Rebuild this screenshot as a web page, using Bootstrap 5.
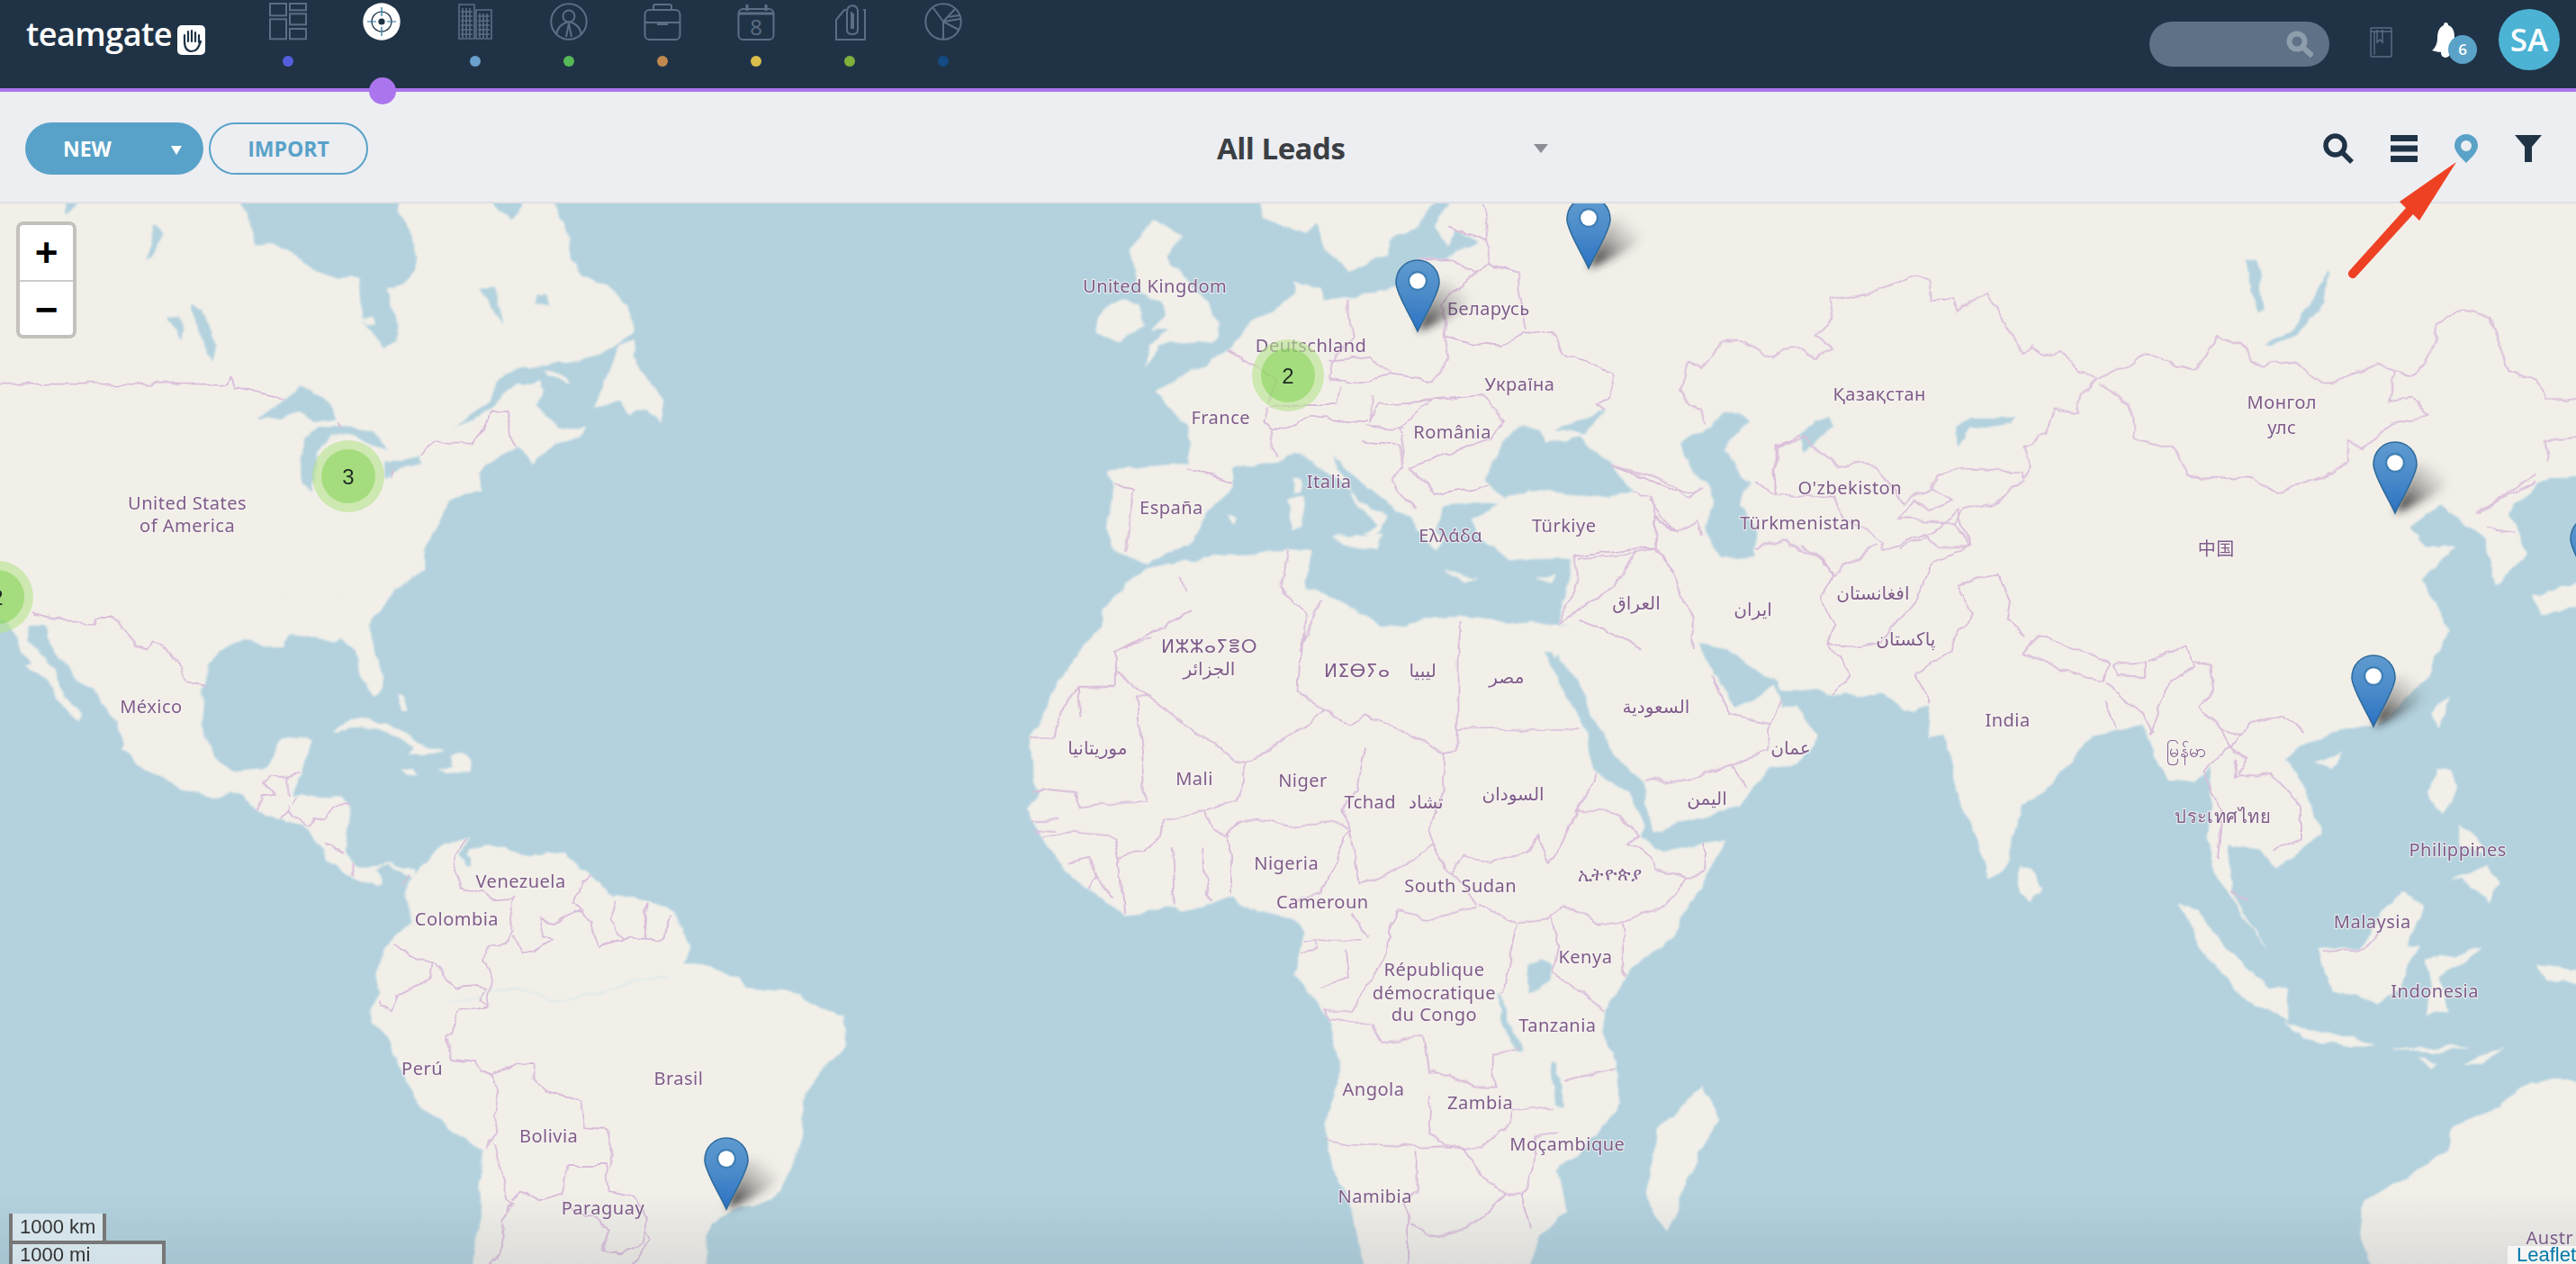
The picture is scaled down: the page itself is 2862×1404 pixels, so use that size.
<!DOCTYPE html>
<html lang="en">
<head>
<meta charset="utf-8">
<title>Teamgate - All Leads</title>
<link href="https://cdn.jsdelivr.net/npm/bootstrap@5.3.0/dist/css/bootstrap.min.css" rel="stylesheet">
<style>
html,body{height:100%;margin:0;overflow:hidden;background:#edeef2}
body{font-family:"Open Sans","Noto Sans",sans-serif}
.app-root{height:1404px;width:2862px;display:flex;flex-direction:column;position:relative}
.top-bar{height:102px;background:#203346;border-bottom:4px solid #ab75ed;align-items:flex-start;flex-wrap:nowrap;padding:0}
.brand-box{width:268px;height:98px;padding:0 0 0 29px;display:flex;align-items:flex-start;gap:6px;margin:0}
.brand-word{font-family:"Open Sans",sans-serif;font-weight:600;color:#fff;font-size:36px;line-height:1;margin-top:20px;letter-spacing:-.5px}
.brand-hand{width:31px;height:33px;margin-top:28px;flex:none}
.mod-list{display:flex;margin:0;padding:0;list-style:none}
.mod-item{width:104px;height:98px;display:flex;flex-direction:column;align-items:center;position:relative;padding-top:3px}
.mod-item svg{display:block;width:42px;height:42px;fill:none;stroke:#5a6e84;stroke-width:2}
.mod-dot{width:12px;height:12px;border-radius:50%;margin-top:17px}
.mod-on{width:30px;height:30px;border-radius:50%;background:#ab75ed;position:absolute;left:38px;top:86px;z-index:3}
.dot-a{background:#535fdc}.dot-b{background:#6aa0cc}.dot-c{background:#55b957}.dot-d{background:#c08a4f}.dot-e{background:#d9bf4c}.dot-f{background:#7fb03a}.dot-g{background:#154a85}
.top-right{display:flex;align-items:center;height:98px;margin-left:auto;padding-right:18px}
.find-pill{width:200px;height:50px;border-radius:25px;background:#5e7186;display:flex;align-items:center;justify-content:flex-end;padding-right:18px;margin-right:45px}
.book-ico{width:25px;height:34px;margin-right:44px;margin-top:-4px}
.bell-wrap{position:relative;width:46px;height:42px;margin-right:28px;margin-top:-8px}
.bell-count{position:absolute;left:18px;top:15px;width:32px;height:32px;border-radius:50%;background:#5aa2c8;color:#fff;font-size:17px;font-weight:600;line-height:32px;text-align:center}
.user-disc{width:68px;height:68px;border-radius:50%;background:#4cb3d4;color:#fff;font-size:35px;font-weight:600;line-height:68px;text-align:center;margin-top:-10px}
.tool-bar{height:124px;background:#edeef2;border-bottom:2px solid #dfdfe4;display:flex;align-items:center;padding:4px 0 0 28px}
.tool-left{flex:1 1 0;display:flex;gap:6px;align-items:center}
.btn.new-btn{width:198px;height:58px;background:#58a2c9;color:#fff;border:0;border-radius:29px;font-weight:700;font-size:23px;display:flex;align-items:center;justify-content:space-between;padding:0 24px 0 42px}
.new-caret{width:0;height:0;border-left:6px solid transparent;border-right:6px solid transparent;border-top:10px solid #fff;margin-top:3px}
.btn.imp-btn{width:177px;height:58px;background:transparent;color:#58a2c9;border:2px solid #58a2c9;border-radius:29px;font-weight:700;font-size:23px;padding:0}
.view-pick{width:590px;display:flex;align-items:center;padding-left:221px}
.view-name{font-size:33px;font-weight:700;color:#3b3f44;margin:0;letter-spacing:-.5px}
.view-caret{margin-left:auto;margin-right:1px;width:0;height:0;border-left:8px solid transparent;border-right:8px solid transparent;border-top:10px solid #8b8f95}
.tool-right{flex:1 1 0;display:flex;justify-content:flex-end;align-items:center;gap:41px;padding-right:38px}
.tool-right svg{display:block}
.map-area{flex:1 1 auto;position:relative;overflow:hidden;background:#b3d2de}
.map-svg{display:block;width:2862px;height:1178px}
.lnd{fill:#f2efe9;stroke:#f2efe9;stroke-width:1;vector-effect:non-scaling-stroke}
.wtr{fill:#b3d2de;stroke:#b3d2de;stroke-width:1;vector-effect:non-scaling-stroke}
.riv{fill:none;stroke:#dfeaea;stroke-width:2;vector-effect:non-scaling-stroke}
.brd polyline{fill:none;stroke:#d9bdd9;stroke-width:1.9;vector-effect:non-scaling-stroke;stroke-linejoin:round}
.lbl text{font-family:"Noto Sans","DejaVu Sans","Noto Sans CJK SC",sans-serif;font-size:11px;fill:#7f5c8a;text-anchor:middle;stroke:#f6f3f0;stroke-opacity:.75;stroke-width:1.3px;paint-order:stroke;letter-spacing:.25px}
.clu-num{font-family:"Liberation Sans",Arial,sans-serif;font-size:24px;fill:#1f2a24;text-anchor:middle}
.zoom-box{position:absolute;left:18px;top:20px;width:67px;border:4px solid #c4c1bc;border-radius:8px;background:#fff;overflow:hidden}
.zoom-key{display:block;height:61px;text-align:center;color:#000;font:700 44px/62px "Liberation Sans",Arial,sans-serif;text-decoration:none}
.zoom-key+.zoom-key{border-top:2px solid #ccc}
.scale-wrap{position:absolute;left:10px;bottom:0;font:22px/26px "Liberation Sans",Arial,sans-serif;color:#333}
.scale-km{width:108px;height:30px;border:4px solid #777;border-top:0;border-bottom:0;background:rgba(255,255,255,.5);padding:2px 0 0 8px;white-space:nowrap}
.scale-mi{width:174px;height:26px;border:4px solid #777;border-bottom:0;background:rgba(255,255,255,.5);padding:0 0 0 8px;white-space:nowrap;line-height:24px}
.attrib{position:absolute;right:0;bottom:0;height:20px;background:rgba(255,255,255,.7);padding:0 0 0 10px;font:22px/20px "Liberation Sans",Arial,sans-serif}
.attrib a{color:#0078a8;text-decoration:none}
.fade-foot{position:absolute;left:0;right:0;bottom:0;height:80px;background:linear-gradient(rgba(70,90,110,0),rgba(70,90,110,.12));pointer-events:none}
.call-out{position:absolute;left:2600px;top:170px;width:140px;height:150px;z-index:5}
</style>
</head>
<body>
<div class="app-root">
<nav class="navbar top-bar">
  <a class="navbar-brand brand-box" href="#"><span class="brand-word">teamgate</span>
    <svg class="brand-hand" viewBox="0 0 31 33"><rect width="31" height="33" rx="5" fill="#fff"/><path d="M8 19v-8M12 18V7M16 18V6M20 18V8M24 19v-8M8 18c0 7 3 11 8 11s7-3 10-11" fill="none" stroke="#203346" stroke-width="2.2" stroke-linecap="round"/></svg>
  </a>
  <ul class="mod-list">
    <li class="mod-item"><svg viewBox="0 0 42 42"><rect x="1" y="1" width="18" height="13.3"/><rect x="23" y="1" width="18" height="7.3"/><rect x="23" y="12.3" width="18" height="12"/><rect x="1" y="18.3" width="18" height="22"/><rect x="23" y="29" width="18" height="11.3"/></svg><span class="mod-dot dot-a"></span></li>
    <li class="mod-item"><svg viewBox="0 0 42 42"><circle cx="21" cy="21" r="20.7" fill="#fff" stroke="none"/><circle cx="21" cy="21" r="11" stroke="#203346" stroke-width="1.2"/><circle cx="21" cy="21" r="3.6" fill="#203346" stroke="none"/><path d="M21 5v10M21 27v10M5 21h10M27 21h10" stroke="#1f6f9c" stroke-width="1.2"/></svg><span class="mod-on"></span></li>
    <li class="mod-item"><svg viewBox="0 0 42 42"><path d="M3 40V2h17v38zM22 40V8h17v32zM7 6v33M11 6v33M15 6v33M26 12v27M30 12v27M34 12v27M5 10h13M5 15h13M5 20h13M5 25h13M5 30h13M5 35h13M24 15h13M24 20h13M24 25h13M24 30h13M24 35h13" stroke-width="1.6"/></svg><span class="mod-dot dot-b"></span></li>
    <li class="mod-item"><svg viewBox="0 0 42 42"><circle cx="21" cy="21" r="19.7"/><circle cx="21" cy="15" r="6.5"/><path d="M7 36c1-8 6-13 14-15 8 2 13 7 14 15M21 23l-3 15M21 23l3 15"/></svg><span class="mod-dot dot-c"></span></li>
    <li class="mod-item"><svg viewBox="0 0 42 42"><rect x="1.5" y="8" width="39" height="33" rx="5"/><path d="M11 8V4q0-2 2-2h16q2 0 2 2v4M1.5 22h39M16 22v2h10v-2"/></svg><span class="mod-dot dot-d"></span></li>
    <li class="mod-item"><svg viewBox="0 0 42 42"><rect x="1.5" y="7" width="39" height="34" rx="5"/><path d="M1.500 12h39M11 2v7M32 2v7" stroke-width="3"/><text x="21" y="36" text-anchor="middle" font-family="Open Sans,sans-serif" font-size="24" fill="#5a6e84" stroke="none">8</text></svg><span class="mod-dot dot-e"></span></li>
    <li class="mod-item"><svg viewBox="0 0 42 42"><path d="M15 8 6 19v22h32V8h-2M15 8h2"/><path d="M18 10v20q0 5 6 5t6-5V9q0-5-6-6-6 1-6 7M23 10v18h2V12" stroke-width="2"/></svg><span class="mod-dot dot-f"></span></li>
    <li class="mod-item"><svg viewBox="0 0 42 42"><circle cx="21" cy="21" r="19.7"/><path d="M21 41V21L10 6M21 21 34 7M21 21l19-3M21 21l17 9M25 16l14-2"/></svg><span class="mod-dot dot-g"></span></li>
  </ul>
  <div class="top-right">
    <div class="find-pill"><svg width="30" height="30" viewBox="0 0 30 30"><circle cx="12" cy="12" r="8.5" fill="none" stroke="#8e9dac" stroke-width="6"/><path d="m18 18 11 10" stroke="#8e9dac" stroke-width="6"/></svg></div>
    <svg class="book-ico" viewBox="0 0 25 34" fill="none" stroke="#5a6e84" stroke-width="1.4"><rect x="1" y="1" width="23" height="32" rx="1"/><path d="M1 5h23M5 5v26M8 3v14l3-3 3 3V3"/></svg>
    <div class="bell-wrap"><svg width="30" height="40" viewBox="0 0 30 40"><path d="M15 1c2 0 3 1 3 3 6 2 7 8 7 14 0 6 2 11 5 14-9 3-21 3-30 0 4-3 6-8 6-14 0-6 2-12 7-14 0-2 1-3 2-3z" fill="#fff"/><circle cx="15" cy="35" r="5" fill="#fff"/></svg><span class="bell-count">6</span></div>
    <div class="user-disc">SA</div>
  </div>
</nav>
<div class="tool-bar">
  <div class="tool-left">
    <button type="button" class="btn new-btn"><span>NEW</span><span class="new-caret"></span></button>
    <button type="button" class="btn imp-btn">IMPORT</button>
  </div>
  <div class="view-pick"><h1 class="view-name">All Leads</h1><span class="view-caret"></span></div>
  <div class="tool-right">
    <svg width="34" height="34" viewBox="0 0 34 34"><circle cx="13.5" cy="13.5" r="10.5" fill="none" stroke="#203346" stroke-width="5.5"/><path d="m21 21 11 11" stroke="#203346" stroke-width="5.5"/></svg>
    <svg width="30" height="30" viewBox="0 0 30 30" fill="#203346"><rect width="30" height="7"/><rect y="11.500" width="30" height="7"/><rect y="23" width="30" height="7"/></svg>
    <svg width="26" height="32" viewBox="0 0 26 32"><path fill-rule="evenodd" d="M13 0C5.500 0 0 5.500 0 13c0 7 9 15 13 19 4-4 13-12 13-19C26 5.500 20.500 0 13 0zm0 7a6 6 0 1 1 0 12 6 6 0 0 1 0-12z" fill="#5aa2c8"/></svg>
    <svg width="30" height="30" viewBox="0 0 30 30" fill="#203346"><path d="M0 0h30L19 13v17h-8V13z"/></svg>
  </div>
</div>
<div class="map-area">
<svg class="map-svg" viewBox="0 226 2862 1178" xmlns="http://www.w3.org/2000/svg">
<defs>
<filter id="rough" filterUnits="userSpaceOnUse" x="-30" y="200" width="2930" height="1240" color-interpolation-filters="sRGB"><feTurbulence type="fractalNoise" baseFrequency=".035" numOctaves="3" seed="4" result="n"/><feDisplacementMap in="SourceGraphic" in2="n" scale="12" xChannelSelector="R" yChannelSelector="G"/><feGaussianBlur stdDeviation=".9"/></filter>
<filter id="roughline" filterUnits="userSpaceOnUse" x="-30" y="200" width="2930" height="1240" color-interpolation-filters="sRGB"><feTurbulence type="fractalNoise" baseFrequency=".035" numOctaves="3" seed="4" result="n"/><feDisplacementMap in="SourceGraphic" in2="n" scale="12" xChannelSelector="R" yChannelSelector="G"/><feGaussianBlur stdDeviation=".4"/></filter>
<filter id="shade" x="-50%" y="-50%" width="200%" height="200%"><feGaussianBlur stdDeviation="5"/></filter>
<linearGradient id="pinFill" x1="0" y1="0" x2="0" y2="1"><stop offset="0" stop-color="#5f9bd0"/><stop offset=".5" stop-color="#4a8ac9"/><stop offset="1" stop-color="#2a72c4"/></linearGradient>
<linearGradient id="pinShade" x1="0" y1="1" x2="1" y2="0"><stop offset=".15" stop-color="#222" stop-opacity=".85"/><stop offset=".45" stop-color="#333" stop-opacity=".38"/><stop offset=".85" stop-color="#555" stop-opacity="0"/></linearGradient>
<symbol id="pin" viewBox="0 0 100 84" width="100" height="84" overflow="visible">
<path d="M25 80 44 30C56 18 84 22 84 42 80 56 54 68 25 80z" fill="url(#pinShade)" filter="url(#shade)"/>
<path d="M25 1C11 1 1 12 1 26c0 12 18 40 24 54 6-14 24-42 24-54C49 12 39 1 25 1z" fill="url(#pinFill)" stroke="#2f6b9b" stroke-width="1.6"/>
<circle cx="25" cy="24" r="11" fill="#3f7fb5"/><circle cx="25" cy="24" r="8.800" fill="#fff"/>
</symbol>
</defs>
<g filter="url(#rough)">
<rect class="lnd" x="1900" y="210" width="990" height="216"/>
<g transform="translate(0 220) scale(.574 .3333)">
<polygon class="lnd" points="-60,-10 130,-10 130,60 165,-10 448,-10 480,50 495,160 520,150 560,175 590,220 650,270 695,265 700,400 740,500 765,470 770,430 750,300 790,270 810,200 790,90 770,40 780,-10 945,-10 990,80 1025,-10 1070,-10 1085,70 1100,130 1105,190 1130,260 1190,310 1215,370 1222,450 1190,490 1160,520 1090,550 1010,560 970,610 940,680 900,740 880,765 925,740 960,680 1000,620 1040,610 1055,640 1040,690 1060,740 1090,770 1135,770 1100,810 1040,860 1030,890 1015,850 1000,820 960,860 925,920 930,980 870,1010 855,1080 820,1170 820,1230 760,1320 720,1400 -60,1400"/>
<polygon class="lnd" points="1200,490 1222,480 1225,530 1260,610 1282,680 1275,740 1250,700 1215,725 1200,680 1150,690 1170,620"/>
<polygon class="lnd" points="1050,575 1100,600 1105,615 1060,595"/>
<polygon class="wtr" points="500,735 550,680 580,625 620,650 640,690 650,735 610,745 580,715 540,735"/>
<polygon class="wtr" points="590,800 620,770 660,760 720,770 745,830 710,810 680,790 640,790 610,860 605,975 585,950"/>
<polygon class="wtr" points="745,880 810,860 815,890 770,900 745,935"/>
<polygon class="wtr" points="365,355 390,370 415,490 410,545 395,470"/>
<polygon class="wtr" points="325,395 350,400 352,475 340,440"/>
<polygon class="wtr" points="300,95 312,110 295,190 282,205 290,150"/>
<polygon class="wtr" points="935,300 955,300 975,420 945,340"/>
<polygon class="wtr" points="1040,325 1060,320 1065,350 1035,355"/>
<polygon class="lnd" points="700,395 725,395 728,420 710,415"/>
</g>
<g transform="translate(0 680) scale(.3333)">
<polygon class="lnd" points="-40,-60 50,70 70,130 110,170 85,175 90,180 160,220 180,260 200,300 255,360 270,345 220,270 180,190 130,130 90,100 90,40 150,40 170,110 270,230 330,280 400,370 415,440 405,455 460,510 530,545 600,585 710,620 770,600 810,610 860,665 930,690 1010,710 1080,790 1085,825 1170,880 1250,915 1270,905 1255,870 1290,835 1340,860 1375,890 1380,880 1380,860 1300,835 1260,855 1190,850 1150,790 1165,650 1140,620 1080,610 1000,615 975,615 1000,520 1020,480 1045,425 1000,408 940,420 920,450 915,490 885,520 780,530 730,510 690,430 670,380 670,280 685,230 690,180 760,110 820,95 900,110 940,110 960,85 1050,75 1110,100 1140,85 1180,125 1190,170 1205,215 1250,275 1270,260 1275,210 1240,120 1230,50 1250,0 1260,-60"/>
<polygon class="lnd" points="1115,400 1150,365 1200,350 1270,370 1330,390 1400,440 1475,460 1360,470 1380,450 1330,420 1270,390 1200,375 1150,390"/>
<polygon class="lnd" points="1335,525 1370,520 1403,540 1360,545"/>
<polygon class="lnd" points="1465,520 1510,515 1500,475 1530,470 1565,490 1565,530 1490,532"/>
<polygon class="lnd" points="1335,280 1350,285 1362,325 1345,320"/>
</g>
<g transform="translate(340 900) scale(.3827 .3333)">
<polygon class="lnd" points="300,240 350,170 385,125 430,110 480,85 440,150 470,180 480,130 520,110 570,130 640,150 700,140 760,150 790,200 830,220 890,290 950,295 1020,310 1070,350 1115,450 1095,510 1140,520 1250,550 1285,600 1400,600 1490,665 1560,680 1568,720 1560,790 1490,870 1445,950 1440,1080 1400,1230 1350,1300 1260,1320 1180,1380 1160,1420 1165,1550 490,1550 510,1320 515,1140 480,1110 340,1000 270,850 240,760 195,710 185,660 215,610 200,540 225,470 260,430 310,370 295,280"/>
<polygon class="wtr" points="462,150 480,160 482,190 465,185"/>
<polyline class="riv" points="420,640 500,620 600,590 720,640 850,610 940,570 1050,555"/>
</g>
<g transform="translate(1100 220) scale(.574 .3333)">
<polygon class="lnd" points="520,-10 530,60 575,95 610,115 635,85 650,170 695,235 770,190 775,130 830,95 870,-10"/>
<polygon class="lnd" points="895,-10 860,95 890,165 905,105 945,145 880,205 830,205 830,265 750,310 695,345 640,340 635,300 590,285 590,320 550,380 510,410 465,510 400,570 370,600 320,650 385,760 385,885 228,905 238,960 225,1090 240,1170 300,1220 390,1140 415,1050 470,960 470,900 550,880 590,850 640,890 720,1020 770,1060 745,1130 720,1120 750,1090 700,1000 660,850 700,920 790,1040 815,1060 860,1180 880,1140 860,1100 880,1030 940,1010 990,1020 950,1050 930,1070 950,1130 1000,1210 1100,1190 1125,1200 1120,1290 1100,1420 1568,1520 1640,1520 1640,-10"/>
<polygon class="lnd" points="300,1235 430,1195 570,1180 620,1170 610,1300 680,1345 790,1460 810,1420 900,1390 1020,1420 1100,1420 1120,1520 210,1520 220,1370"/>
<polygon class="lnd" points="320,70 370,130 345,200 380,270 445,410 430,480 330,490 300,560 310,490 350,440 310,440 340,390 335,340 290,310 270,170"/>
<polygon class="lnd" points="205,450 220,370 260,345 290,350 295,420 250,480"/>
<polygon class="lnd" points="578,1005 605,1000 605,1095 585,1100"/>
<polygon class="lnd" points="585,940 600,940 600,985 585,985"/>
<polygon class="lnd" points="660,1130 760,1125 745,1165 690,1150"/>
<polygon class="lnd" points="880,1245 945,1260 920,1272"/>
<polygon class="lnd" points="1055,1268 1095,1255 1085,1280"/>
<polygon class="lnd" points="460,1060 480,1065 475,1085"/>
<polygon class="wtr" points="960,940 975,870 990,830 1030,750 1060,770 1080,820 1140,800 1200,880 1240,970 1200,1005 1140,990 1040,965 1000,1000 975,970"/>
<polygon class="wtr" points="1100,770 1190,710 1150,790"/>
<polygon class="wtr" points="1340,810 1390,760 1420,715 1470,740 1440,800 1420,850 1470,950 1450,1020 1480,1100 1480,1190 1420,1200 1380,1110 1400,1030 1390,960 1340,860"/>
</g>
<g transform="translate(1100 700) scale(.574 .449)">
<polygon class="lnd" points="225,-10 180,40 130,130 95,230 75,265 85,330 95,400 72,440 90,490 150,600 190,640 260,705 340,680 370,695 470,660 520,700 580,705 605,740 590,850 655,960 680,1090 650,1210 650,1280 700,1440 725,1575 1040,1575 1060,1500 1115,1440 1100,1340 1175,1240 1215,1190 1215,1100 1190,1000 1190,940 1235,840 1320,760 1425,520 1300,550 1262,510 1265,480 1240,400 1170,350 1150,250 1085,90 1055,30 1050,-10"/>
<polygon class="lnd" points="1050,-10 1105,-10 1095,70 1075,50 1055,25"/>
<polygon class="lnd" points="1100,-10 1100,60 1130,120 1180,250 1235,350 1262,370 1285,495 1450,430 1510,340 1568,320 1590,295 1600,260 1560,190 1530,190 1520,135 1490,170 1440,190 1405,110 1365,15 1430,50 1500,110 1568,145 1620,145 1620,-10"/>
<polygon class="lnd" points="1290,1240 1380,1130 1410,1210 1370,1300 1310,1490 1270,1400"/>
<polygon class="wtr" points="1040,830 1065,810 1090,830 1085,870 1045,890"/>
<polygon class="wtr" points="985,900 1000,960 1030,1040 1015,1035 990,960"/>
<polygon class="wtr" points="1085,1060 1095,1070 1110,1180 1095,1170"/>
</g>
<g transform="translate(2000 400) scale(.5497 .6403)">
<polygon class="lnd" points="-40,-10 1600,-10 1600,190 1495,210 1430,270 1470,330 1410,390 1385,310 1330,275 1300,250 1235,290 1260,325 1325,325 1260,380 1310,470 1250,570 1160,635 1060,650 980,690 1020,740 1050,820 960,885 930,850 860,840 870,920 940,1020 880,940 830,880 830,700 790,735 745,730 690,635 590,650 490,750 450,770 410,885 385,895 320,760 295,650 260,660 265,600 205,610 170,578 67,580 0,570 -40,570"/>
<polygon class="lnd" points="765,945 800,955 860,1020 950,1090 985,1095 980,1145 920,1120 840,1060"/>
<polygon class="lnd" points="975,1150 1030,1160 1160,1190 1100,1190 1030,1175"/>
<polygon class="lnd" points="1050,1020 1130,1020 1190,950 1220,920 1255,945 1230,1020 1250,1020 1210,1080 1170,1115 1075,1090"/>
<polygon class="lnd" points="1265,1040 1380,1020 1290,1070 1310,1130 1265,1140 1275,1070"/>
<polygon class="lnd" points="445,880 470,885 487,920 465,938 445,925"/>
<polygon class="lnd" points="1285,710 1320,710 1325,740 1300,790 1270,750"/>
<polygon class="lnd" points="1320,900 1390,880 1410,910 1390,940 1340,900"/>
<polygon class="lnd" points="1330,810 1370,830 1380,860 1340,840"/>
<polygon class="lnd" points="1280,610 1310,585 1290,640"/>
<polygon class="lnd" points="1040,700 1090,680 1070,710"/>
<polygon class="lnd" points="1480,410 1540,395 1600,370 1600,430 1500,440"/>
<polygon class="lnd" points="1490,1050 1600,1060 1600,1085 1510,1075"/>
<polygon class="lnd" points="1200,1195 1350,1190 1300,1200"/>
<polygon class="lnd" points="1345,1225 1420,1190 1380,1225"/>
<polygon class="lnd" points="1250,1210 1290,1215 1280,1225"/>
<polygon class="lnd" points="1140,1460 1310,1370 1320,1330 1400,1300 1480,1250 1600,1250 1600,1600 1165,1600 1130,1520"/>
<polygon class="wtr" points="315,130 340,105 430,100 400,115 345,115 325,145"/>
</g>
<g transform="translate(1700 226) scale(.7411 .3333)">
<polygon class="wtr" points="640,750 660,715 725,715 720,735 660,740 645,800"/>
<polygon class="wtr" points="1105,465 1140,430 1175,320 1195,225 1190,340 1140,450 1115,470"/>
<polygon class="wtr" points="1070,190 1088,190 1100,350 1090,360 1075,260"/>
<polygon class="wtr" points="405,770 445,715 450,740 410,830"/>
</g>
</g>
<g class="brd" filter="url(#roughline)">
<g transform="translate(0 220) scale(.574 .3333)">
<polyline points="0,620 440,620 445,595 455,635 555,670"/><polyline points="655,745 665,770"/><polyline points="760,905 755,930"/><polyline points="815,860 840,815 910,815 935,770 955,700 985,710 985,790 998,820"/>
</g>
<g transform="translate(0 680) scale(.3333)">
<polyline points="110,0 220,35 310,35 315,18 375,18 430,70 445,110 490,130 510,97 545,100 610,190 625,230 690,250"/>
<polyline points="858,660 870,610 920,605 885,565 905,545 960,545 965,615"/><polyline points="960,545 990,520"/><polyline points="975,640 995,620"/>
<polyline points="960,645 960,670 1010,690 1015,710 1030,715 1050,685 1085,680 1110,650 1165,645"/><polyline points="930,690 960,665"/><polyline points="1085,775 1145,795"/><polyline points="1180,835 1180,880"/>
</g>
<g transform="translate(340 900) scale(.3827 .3333)">
<polyline points="470,90 430,150 425,185 450,250 490,265 515,270 540,295 600,290 590,360 600,405 585,435 525,450 520,500 540,540 525,650"/>
<polyline points="600,420 625,475 660,470 720,425 690,420 680,365 720,375 810,335"/>
<polyline points="825,215 800,240 780,310 810,335 830,370 825,420 850,460 920,435 885,370 900,300"/>
<polyline points="920,435 940,415 985,420 995,310 985,340 985,420 1020,435 1065,360"/>
<polyline points="300,215 285,250"/>
<polyline points="258,455 320,490 365,505 430,585 500,580 520,600 505,630 525,650"/>
<polyline points="365,505 360,550 300,600 270,620 250,670 215,650 215,630"/>
<polyline points="525,650 450,670 425,740 405,760 430,825 500,835 505,880 540,880"/>
<polyline points="540,880 640,840 660,840 660,900 700,935 800,970 810,1060 870,1065 890,1130 880,1200"/>
<polyline points="540,880 560,935 545,1020 550,1080 520,1135"/>
<polyline points="540,1120 565,1200 590,1300 605,1310 565,1370 570,1450 535,1512"/>
<polyline points="605,1300 630,1270 680,1300 740,1275 760,1185 870,1185 880,1270 945,1285 990,1350 980,1450 920,1480 860,1465 885,1390 740,1300"/>
<polyline points="985,1405 1005,1440 950,1512"/>
</g>
<g transform="translate(1100 220) scale(.574 .3333)">
<polyline points="240,960 280,970 270,1060 265,1180"/><polyline points="380,900 440,930 470,945"/>
<polyline points="460,515 510,560 550,600 545,680"/><polyline points="540,700 530,750 550,780 620,725 680,740 735,745"/><polyline points="550,780 545,830 555,860"/>
<polyline points="690,350 700,470 660,550 655,600"/><polyline points="655,545 740,530 780,590 700,620 655,600"/><polyline points="680,630 670,690 610,690 545,700"/><polyline points="735,660 740,750 750,680 860,670"/>
<polyline points="880,465 885,540 860,610 780,590"/><polyline points="880,465 990,495 1030,455 1085,440 1110,520 1205,585 1195,680 1170,690 1190,710"/>
<polyline points="875,400 880,465"/><polyline points="875,400 875,350 940,250"/><polyline points="830,205 900,205 935,250 965,215 1020,250 1040,440"/><polyline points="960,140 965,215"/><polyline points="890,100 945,130 960,140 965,50 950,18"/>
<polyline points="860,670 790,770 800,880 780,950 820,1040"/><polyline points="860,670 950,655 1000,750 970,800 860,870 815,900 860,990 965,960"/><polyline points="720,810 790,830 800,900"/><polyline points="730,760 800,770"/>
<polyline points="1205,890 1270,930 1330,980 1370,980"/><polyline points="1275,1010 1300,1060 1330,1110 1290,1070 1290,1160"/>
<polyline points="1130,1190 1250,1165 1290,1170"/><polyline points="1130,1190 1135,1290 1100,1420"/><polyline points="1250,1170 1210,1290 1140,1370 1100,1420"/><polyline points="1290,1170 1325,1260 1360,1400 1360,1500"/><polyline points="1145,1400 1260,1500"/>
<polyline points="1520,990 1520,820 1568,790"/><polyline points="905,1410 905,1500"/><polyline points="575,1180 565,1300 610,1400 605,1500"/><polyline points="380,1310 370,1260"/><polyline points="640,1340 600,1500"/><polyline points="385,1380 300,1460 255,1500"/>
</g>
<g transform="translate(1100 700) scale(.574 .449)">
<polyline points="240,100 240,50 310,20"/><polyline points="240,100 470,320 495,325 650,205 600,150 605,0"/><polyline points="75,265 120,265 125,235 170,140 240,140 240,100"/><polyline points="240,140 170,140 175,210"/>
<polyline points="285,165 310,165"/><polyline points="285,165 305,420 175,435 165,400 120,395 85,400"/>
<polyline points="495,325 495,380 480,420 415,440 340,470 300,550 250,555"/><polyline points="415,440 430,490 460,510 480,470 500,465 580,485 680,475 695,490"/>
<polyline points="725,290 710,400 685,440 695,490 710,600 715,630"/><polyline points="650,205 695,230 725,210 880,305 905,300 905,0"/><polyline points="905,245 1140,245"/>
<polyline points="880,305 880,390 850,490 860,535"/><polyline points="715,630 790,590 860,535 880,590 900,610 945,680"/><polyline points="890,600 920,555 970,580 1040,550 1060,510 1085,580"/>
<polyline points="1085,580 1130,460 1175,355"/><polyline points="1130,450 1200,450 1260,510 1240,530 1260,540 1290,590 1350,615 1380,600 1382,530"/><polyline points="1350,615 1300,690 1225,720 1180,730 1110,680 1085,715 1020,725 950,680"/>
<polyline points="945,685 855,715 790,695 770,740 765,810 740,860 700,940 650,940 655,965 735,970 755,1020 840,1005 850,1095 890,1100 950,1130 975,1130 975,1050 1020,1030"/>
<polyline points="1020,730 1000,850 990,900"/><polyline points="1090,715 1105,780 1090,850 1190,940"/><polyline points="1225,720 1225,860"/><polyline points="1110,1115 1210,1085"/>
<polyline points="850,1150 845,1240 880,1270 920,1280"/><polyline points="645,1260 690,1270 830,1280 910,1275 950,1280 1005,1220 1010,1190 1090,1180"/>
<polyline points="825,1290 825,1390 805,1410 805,1575"/><polyline points="915,1280 960,1360 1000,1395 1030,1395 1050,1340 1060,1250 1095,1240"/><polyline points="1000,1395 940,1470 870,1500 810,1470"/><polyline points="1030,1395 1045,1480"/>
<polyline points="350,540 355,680"/><polyline points="410,540 425,670"/><polyline points="465,500 465,655"/><polyline points="250,560 260,700"/><polyline points="150,580 190,565 205,610 190,640"/><polyline points="205,610 240,660"/><polyline points="80,470 135,470"/><polyline points="80,490 130,495"/><polyline points="100,510 170,500 240,510 250,560"/>
<polyline points="695,490 640,650 575,675"/><polyline points="700,700 730,760"/><polyline points="605,765 720,770"/><polyline points="630,770 635,790 600,795"/><polyline points="690,790 695,860 640,885"/>
<polyline points="1265,370 1350,370 1440,330 1505,300"/><polyline points="1440,330 1462,390"/><polyline points="1505,300 1510,230 1530,165"/><polyline points="1400,110 1430,210 1510,230"/>
</g>
<g transform="translate(1700 226) scale(.7411 .3333)">
<polyline points="225,630 240,525 255,555 285,460 310,455 365,515 380,490 410,490 425,515 455,485 430,440 455,380 450,325 510,300 570,245 600,255 603,320 635,320 640,355 685,305 740,500 750,475 770,505 795,495 820,565 850,585"/>
<polyline points="225,630 255,690 260,730"/>
<polyline points="850,590 825,630 820,700 785,685 775,770 740,805 750,880 738,920 735,895 645,885 610,905 600,955 560,1000 520,880 500,865 460,875 410,780 370,800 368,975 350,950 335,925"/>
<polyline points="850,590 925,505 960,520 970,545 1000,560 1030,440 1075,480 1080,520 1100,540 1150,530 1175,580 1205,595 1270,535 1300,555 1320,570 1335,550 1360,470 1355,395 1400,355 1440,385 1470,560 1510,590 1520,660 1568,640"/>
<polyline points="855,600 900,670 905,785 965,820 985,905 1080,920 1120,960 1190,915 1225,860 1225,795 1250,810 1290,740 1345,715 1320,650 1285,660 1300,555"/>
<polyline points="1420,1030 1470,960 1510,900"/><polyline points="1520,790 1568,780"/><polyline points="1520,790 1525,860"/>
<polyline points="740,925 690,1000 650,1020 640,1060 655,1130 660,1150"/><polyline points="600,950 630,990 600,1025 580,995 550,1050 640,1060"/><polyline points="370,975 455,980 470,1050 530,1130 530,1160 590,1100 610,1150 660,1150"/>
<polyline points="340,1150 380,1120 440,1190 450,1240 520,1140"/><polyline points="120,870 185,905 220,950 240,985 255,950"/><polyline points="150,960 180,985 190,1050 215,1090 250,1050 255,1100"/><polyline points="190,1050 190,1160 215,1230"/><polyline points="70,1180 130,1170 190,1150"/>
</g>
<g transform="translate(2000 400) scale(.5497 .6403)">
<polyline points="0,320 45,345 60,370 45,410 70,460 55,490 100,545 67,580"/><polyline points="55,490 90,500 165,490 230,420 270,350 345,325 320,260 270,300 255,305 200,325"/>
<polyline points="300,505 345,435 320,390 400,370 425,420 420,450 445,470 455,480"/><polyline points="300,505 230,545 265,595"/>
<polyline points="450,510 480,475 625,525 615,555 520,535 450,510"/><polyline points="630,530 695,525 695,548 640,548 630,530"/><polyline points="620,560 690,610 710,650"/><polyline points="615,590 640,640"/>
<polyline points="705,655 750,555 800,530 780,495 700,525"/><polyline points="800,520 830,530 835,575 810,600 850,640 890,650"/><polyline points="890,650 910,630 975,615 1020,650"/><polyline points="885,690 880,725 950,715 1015,775 1015,825 960,850"/><polyline points="890,650 870,670 905,690 885,720"/><polyline points="850,640 870,670 810,710 850,780 840,870"/>
<polyline points="1060,1025 1140,1020 1175,990"/><polyline points="870,920 905,940"/>
<polyline points="1375,265 1420,240 1490,210"/><polyline points="1390,290 1440,300"/>
</g>
</g>
<g class="lbl" transform="scale(1.8253)">
<text x="703" y="178">United Kingdom</text><text x="906" y="192">Беларусь</text><text x="798" y="214">Deutschland</text><text x="743" y="258">France</text><text x="925" y="238">Україна</text><text x="884" y="267">România</text><text x="809" y="297">Italia</text><text x="713" y="313">España</text><text x="883" y="330">Ελλάδα</text><text x="952" y="324">Türkiye</text>
<text x="1096" y="322">Türkmenistan</text><text x="1126" y="301">O'zbekiston</text><text x="1144" y="244">Қазақстан</text><text x="1389" y="249">Монгол</text><text x="1389" y="264">улс</text><text x="1349" y="338">中国</text>
<text x="1140" y="365">افغانستان</text><text x="1160" y="393">پاکستان</text><text x="1067" y="375">ایران</text><text x="996" y="371">العراق</text><text x="1008" y="434">السعودية</text><text x="917" y="416">مصر</text>
<text x="736" y="397">ⵍⵣⵣⴰⵢⴻⵔ</text><text x="736" y="411">الجزائر</text><text x="826" y="412">ⵍⵉⴱⵢⴰ</text><text x="866" y="412">ليبيا</text><text x="668" y="459">موريتانيا</text><text x="727" y="478">Mali</text><text x="793" y="479">Niger</text><text x="834" y="492">Tchad</text><text x="868" y="492">تشاد</text><text x="921" y="487">السودان</text><text x="1039" y="490">اليمن</text><text x="1090" y="459">عمان</text>
<text x="783" y="529">Nigeria</text><text x="805" y="553">Cameroun</text><text x="889" y="543">South Sudan</text><text x="980" y="536">ኢትዮጵያ</text><text x="965" y="586">Kenya</text><text x="873" y="594">République</text><text x="873" y="608">démocratique</text><text x="873" y="621">du Congo</text><text x="948" y="628">Tanzania</text><text x="836" y="667">Angola</text><text x="901" y="675">Zambia</text><text x="954" y="700">Moçambique</text><text x="837" y="732">Namibia</text>
<text x="1222" y="442">India</text><text x="1331" y="461">မြန်မာ</text><text x="1353" y="501">ประเทศไทย</text><text x="1496" y="521">Philippines</text><text x="1444" y="565">Malaysia</text><text x="1482" y="607">Indonesia</text><text x="1552" y="757">Austr</text>
<text x="114" y="310">United States</text><text x="114" y="324">of America</text><text x="92" y="434">México</text><text x="317" y="540">Venezuela</text><text x="278" y="563">Colombia</text><text x="257" y="654">Perú</text><text x="413" y="660">Brasil</text><text x="334" y="695">Bolivia</text><text x="367" y="739">Paraguay</text>
</g>
<g><circle cx="387" cy="529" r="40" fill="#b5e28c" fill-opacity=".6"/><circle cx="387" cy="529" r="30" fill="#6ecc39" fill-opacity=".42"/><text class="clu-num" x="387" y="538">3</text></g>
<g><circle cx="1431" cy="417" r="40" fill="#b5e28c" fill-opacity=".6"/><circle cx="1431" cy="417" r="30" fill="#6ecc39" fill-opacity=".42"/><text class="clu-num" x="1431" y="426">2</text></g>
<g><circle cx="-3" cy="663" r="40" fill="#b5e28c" fill-opacity=".6"/><circle cx="-3" cy="663" r="30" fill="#6ecc39" fill-opacity=".42"/><text class="clu-num" x="-3" y="672">2</text></g>
<use href="#pin" x="1740" y="218"/><use href="#pin" x="1550" y="288"/><use href="#pin" x="2636" y="490"/><use href="#pin" x="2612" y="727"/><use href="#pin" x="782" y="1263"/><use href="#pin" x="2855" y="573"/>
</svg>
<div class="fade-foot"></div>
<div class="zoom-box"><a class="zoom-key" href="#">+</a><a class="zoom-key" href="#">−</a></div>
<div class="scale-wrap"><div class="scale-km">1000 km</div><div class="scale-mi">1000 mi</div></div>
<div class="attrib"><a href="#">Leaflet</a></div>
</div>
<svg class="call-out" viewBox="2600 170 140 150"><path d="M2729 180 2666 224 2673 231 2610 301a5 5 0 0 0 7 7L2681 238l7 7z" fill="#ee4124"/></svg>
</div>
<script src="https://cdn.jsdelivr.net/npm/bootstrap@5.3.0/dist/js/bootstrap.bundle.min.js"></script>
</body>
</html>
